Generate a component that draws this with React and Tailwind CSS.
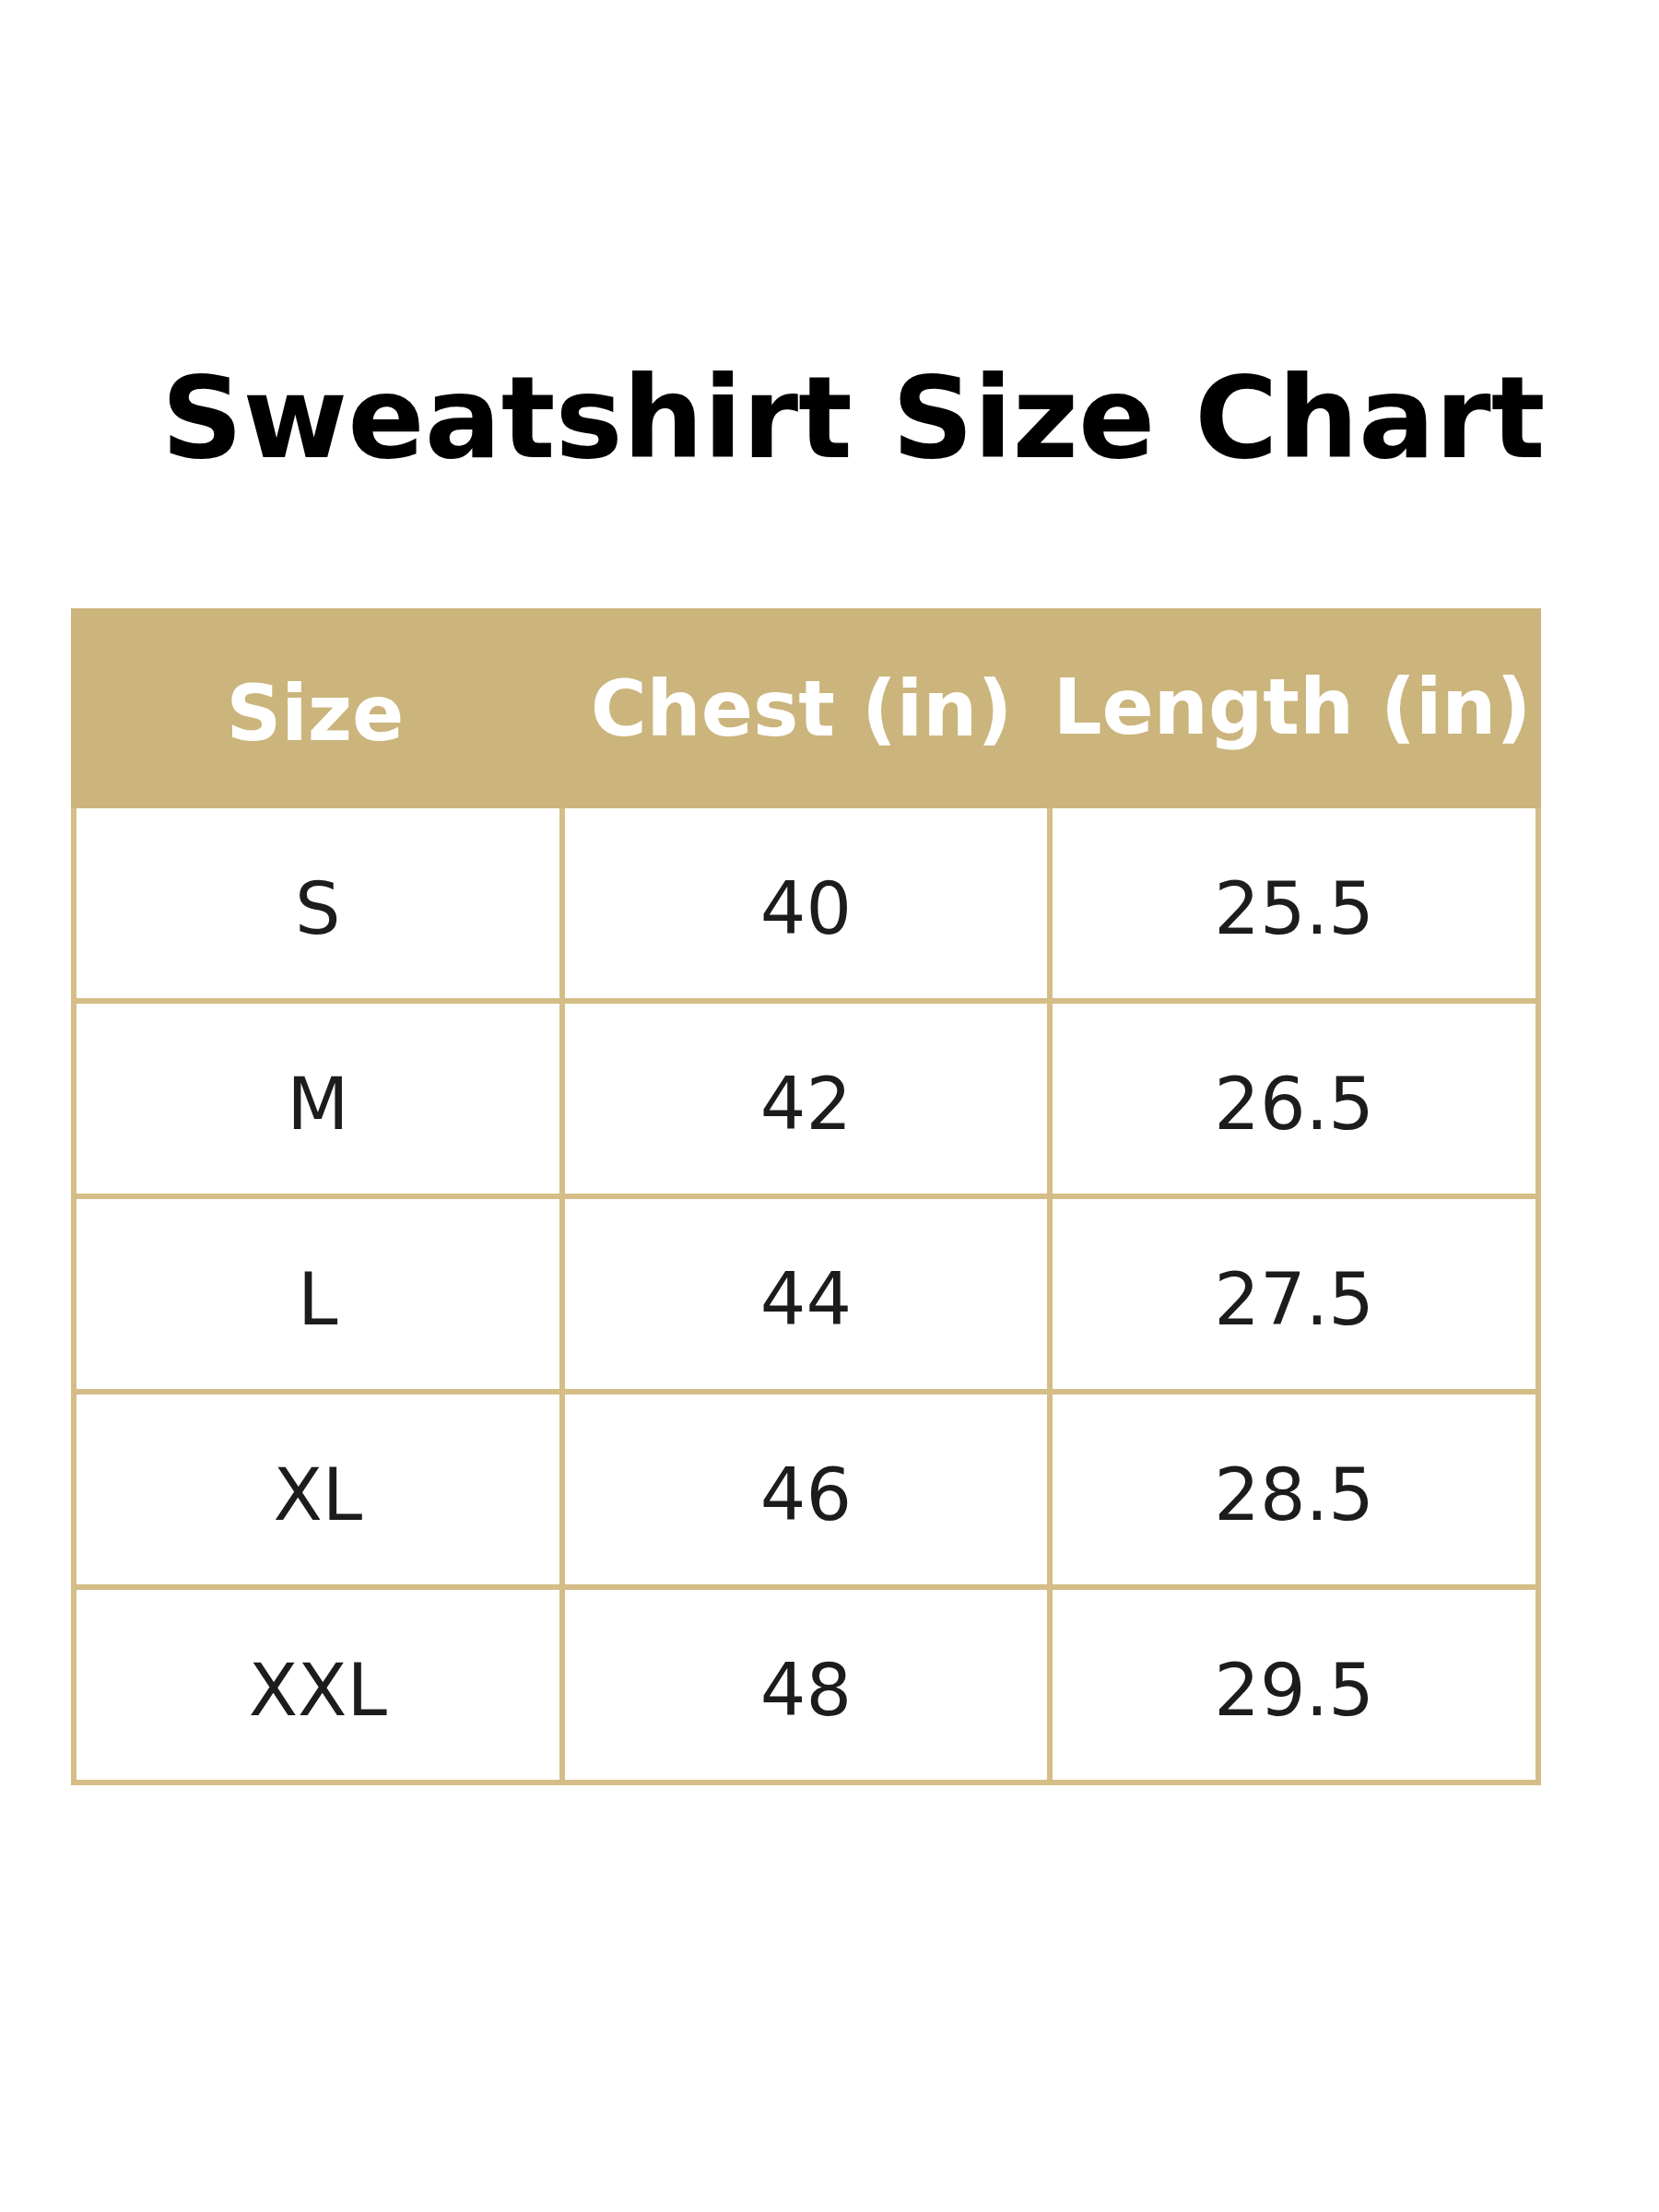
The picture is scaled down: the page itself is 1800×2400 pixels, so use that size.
const rows = [
  { size: 'S', chest: '40', length: '25.5' },
  { size: 'M', chest: '42', length: '26.5' },
  { size: 'L', chest: '44', length: '27.5' },
  { size: 'XL', chest: '46', length: '28.5' },
  { size: 'XXL', chest: '48', length: '29.5' },
]

const font = { fontFamily: '"DejaVu Sans", "Liberation Sans", sans-serif' }

export default function App() {
  return (
    <div className="w-[1800px] h-[2400px] bg-white" style={font}>
      <h1 className="pt-[392px] pl-[175px] text-[123px] leading-none font-bold text-black whitespace-nowrap">
        Sweatshirt Size Chart
      </h1>

      <div className="mt-[145px] ml-[77px] w-[1595px]">
        {/* header */}
        <div className="h-[217px] bg-[#cbb57d] grid grid-cols-[530px_525px_540px] text-white font-bold text-[83px] whitespace-nowrap">
          <div className="flex items-center justify-center pt-[14px]">Size</div>
          <div className="flex items-center justify-center pt-[4px]">Chest (in)</div>
          <div className="flex items-center justify-center">Length (in)</div>
        </div>

        {/* body */}
        <div className="bg-[#d4bd86] grid grid-cols-3 gap-[6px] px-[6px] pb-[6px]">
          {rows.map(r => (
            [r.size, r.chest, r.length].map((v, i) => (
              <div
                key={r.size + i}
                className="h-[206px] bg-white flex items-center justify-center pt-[12px] text-[78px] text-[#1c1c1c]"
              >
                {v}
              </div>
            ))
          ))}
        </div>
      </div>
    </div>
  )
}
